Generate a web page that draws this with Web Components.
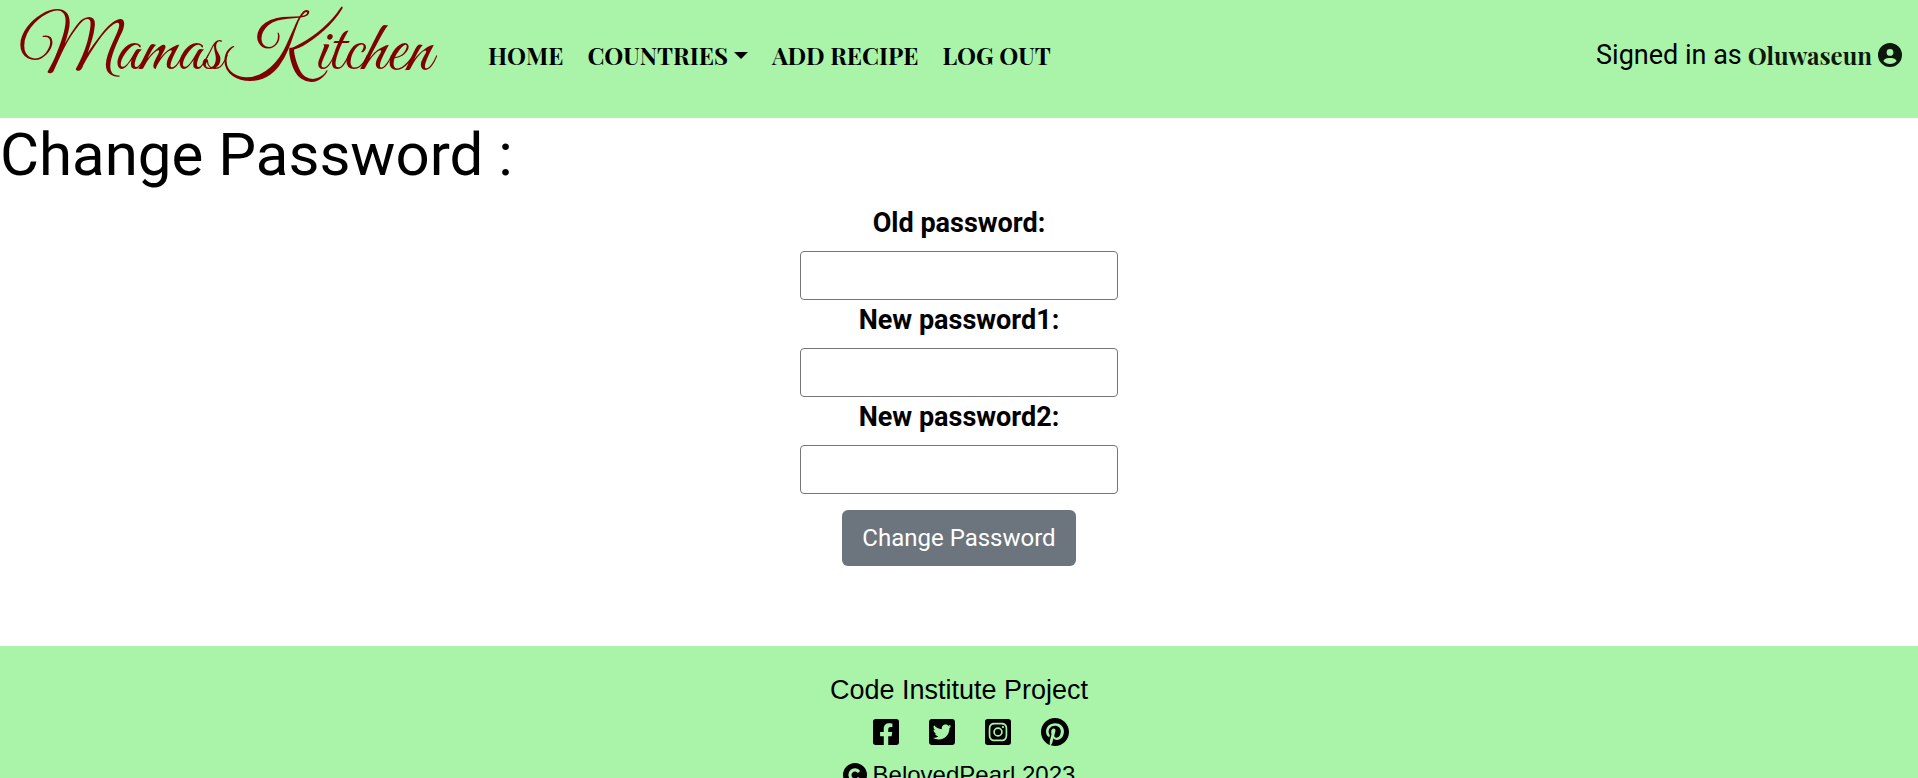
<!DOCTYPE html>
<html lang="en">
<head>
<meta charset="utf-8">
<meta name="viewport" content="width=device-width, initial-scale=1">
<title>Mamas Kitchen - Change Password</title>
<style>
  html { scrollbar-width: none; }
  body {
    margin: 0;
    background: #fff;
    color: #000;
    font-family: Roboto, "Liberation Sans", sans-serif;
    font-size: 27px;
    line-height: 40px;
    --brand-green: #aaf4aa;
    --display-font: "Playfair Display", "Liberation Serif", serif;
  }
</style>
</head>
<body>
<kitchen-page>
  <site-header slot="header" user="Oluwaseun"></site-header>
  <password-form></password-form>
  <site-footer slot="footer"></site-footer>
</kitchen-page>

<script>
const define = (name, html, setup) => {
  const template = document.createElement('template');
  template.innerHTML = html;
  customElements.define(name, class extends HTMLElement {
    constructor() {
      super();
      this.attachShadow({ mode: 'open' }).append(template.content.cloneNode(true));
    }
    connectedCallback() {
      if (setup) setup(this, this.shadowRoot);
    }
  });
};

const ICONS = {
  user: ['0 0 512 512', '<path d="M399 384.2C376.9 345.8 335.4 320 288 320H224c-47.4 0-88.9 25.8-111 64.2c35.2 39.2 86.2 63.8 143 63.8s107.8-24.7 143-63.8zM0 256a256 256 0 1 1 512 0A256 256 0 1 1 0 256zm256 16a72 72 0 1 0 0-144 72 72 0 1 0 0 144z"/>'],
  facebook: ['0 32 448 448', '<path d="M400 32H48A48 48 0 0 0 0 80v352a48 48 0 0 0 48 48h137.25V327.69h-63V256h63v-54.64c0-62.15 37-96.48 93.67-96.48 27.14 0 55.52 4.84 55.52 4.84v61h-31.27c-30.81 0-40.42 19.12-40.42 38.73V256h68.78l-11 71.69h-57.78V480H400a48 48 0 0 0 48-48V80a48 48 0 0 0-48-48z"/>'],
  twitter: ['0 32 448 448', '<path d="M400 32H48C21.5 32 0 53.5 0 80v352c0 26.5 21.5 48 48 48h352c26.5 0 48-21.5 48-48V80c0-26.5-21.5-48-48-48zm-48.9 158.8c.2 2.8.2 5.7.2 8.5 0 86.7-66 186.6-186.6 186.6-37.2 0-71.7-10.8-100.7-29.4 5.3.6 10.4.8 15.8.8 30.7 0 58.9-10.4 81.4-28-28.8-.6-53-19.5-61.3-45.5 10.1 1.5 19.2 1.5 29.6-1.2-30-6.1-52.5-32.5-52.5-64.4v-.8c8.7 4.9 18.9 7.9 29.6 8.3a65.447 65.447 0 0 1-29.2-54.6c0-12.2 3.2-23.4 8.9-33.1 32.3 39.8 80.8 65.8 135.2 68.6-9.3-44.5 24-80.6 64-80.6 18.9 0 35.9 7.9 47.9 20.7 14.8-2.8 29-8.3 41.6-15.8-4.9 15.2-15.2 28-28.8 36.1 13.2-1.4 26-5.1 37.8-10.2-8.9 13.1-20.1 24.7-32.9 34z"/>'],
  instagram: ['0 32 448 448', '<path d="M224,202.66A53.34,53.34,0,1,0,277.36,256,53.38,53.38,0,0,0,224,202.66Zm124.71-41a54,54,0,0,0-30.41-30.41c-21-8.29-71-6.43-94.3-6.43s-73.25-1.93-94.31,6.43a54,54,0,0,0-30.41,30.41c-8.28,21-6.43,71.05-6.43,94.33S91,329.26,99.32,350.33a54,54,0,0,0,30.41,30.41c21,8.29,71,6.43,94.31,6.43s73.24,1.93,94.3-6.43a54,54,0,0,0,30.41-30.41c8.35-21,6.43-71.05,6.43-94.33S357.1,182.74,348.75,161.67ZM224,338a82,82,0,1,1,82-82A81.9,81.9,0,0,1,224,338Zm85.38-148.3a19.14,19.14,0,1,1,19.13-19.14A19.1,19.1,0,0,1,309.42,189.74ZM400,32H48A48,48,0,0,0,0,80V432a48,48,0,0,0,48,48H400a48,48,0,0,0,48-48V80A48,48,0,0,0,400,32ZM382.88,322c-1.29,25.63-7.14,48.34-25.85,67s-41.4,24.63-67,25.85c-26.41,1.49-105.59,1.49-132,0-25.63-1.29-48.26-7.15-67-25.85s-24.63-41.42-25.85-67c-1.49-26.42-1.49-105.61,0-132,1.29-25.63,7.07-48.34,25.85-67s41.47-24.56,67-25.78c26.41-1.49,105.59-1.49,132,0,25.63,1.29,48.33,7.15,67,25.85s24.63,41.42,25.85,67.05C384.37,216.44,384.37,295.56,382.88,322Z"/>'],
  pinterest: ['0 8 496 496', '<path d="M496 256c0 137-111 248-248 248-25.6 0-50.2-3.9-73.4-11.1 10.1-16.5 25.2-43.5 30.8-65 3-11.6 15.4-59 15.4-59 8.1 15.4 31.7 28.5 56.8 28.5 74.8 0 128.7-68.8 128.7-154.3 0-81.9-66.9-143.2-152.9-143.2-107 0-163.9 71.8-163.9 150.1 0 36.4 19.4 81.7 50.3 96.1 4.7 2.2 7.2 1.2 8.3-3.3.8-3.4 5-20.3 6.9-28.1.6-2.5.3-4.7-1.7-7.1-10.1-12.5-18.3-35.3-18.3-56.6 0-54.7 41.4-107.6 112-107.6 60.9 0 103.6 41.5 103.6 100.9 0 67.1-33.9 113.6-78 113.6-24.3 0-42.6-20.1-36.7-44.8 7-29.5 20.5-61.3 20.5-82.6 0-19-10.2-34.9-31.4-34.9-24.9 0-44.9 25.7-44.9 60.2 0 22 7.4 36.8 7.4 36.8s-24.5 103.8-29 123.2c-5 21.4-3 51.6-.9 71.2C65.4 450.9 0 361.1 0 256 0 119 111 8 248 8s248 111 248 248z"/>'],
  copyright: ['0 0 24 24', '<path fill-rule="evenodd" d="M12 0a12 12 0 1 0 0 24 12 12 0 1 0 0-24zM17.4 15.6A6.6 6.6 0 1 1 17.2 7.9L14.8 9.9A3.5 3.5 0 1 0 14.9 13.9z"/>']
};

define('glyph-icon', `
  <style>
    :host { display: inline-flex; flex: none; width: 24px; height: 24px; }
    svg { width: 100%; height: 100%; fill: currentColor; }
  </style>
  <svg aria-hidden="true"></svg>`,
  (host, root) => {
    const [box, shape] = ICONS[host.getAttribute('name')];
    const svg = root.querySelector('svg');
    svg.setAttribute('viewBox', box);
    svg.innerHTML = shape;
  });

define('nav-item', `
  <style>
    :host { display: block; }
    a {
      display: flex; align-items: center; gap: 6px;
      color: #000; text-decoration: none; white-space: nowrap;
      font: bold 24px/40px var(--display-font);
    }
    .caret { display: none; border: 7px solid transparent; border-top-color: currentColor; border-bottom: 0; }
    :host([dropdown]) .caret { display: block; }
  </style>
  <a href="#"><slot></slot><span class="caret"></span></a>`);

define('site-header', `
  <style>
    :host { display: block; background: var(--brand-green); }
    header { display: flex; align-items: flex-start; padding: 0 16px 28px; }
    .brand {
      color: #800000; text-decoration: none; white-space: nowrap;
      font: 72px/74px "Great Vibes", "Liberation Serif", serif;
      padding: 16px 56px 0 3px;
    }
    nav { display: flex; gap: 24px; margin-top: 35px; }
    .user { display: flex; align-items: center; gap: 6px; margin: 35px 0 0 auto; white-space: nowrap; }
    .user a { display: flex; align-items: center; gap: 6px; color: #0b180b; text-decoration: none; }
    strong { font: bold 24px/40px var(--display-font); }
  </style>
  <header>
    <a class="brand" href="#">MamasKitchen</a>
    <nav aria-label="Main">
      <nav-item>HOME</nav-item>
      <nav-item dropdown>COUNTRIES</nav-item>
      <nav-item>ADD RECIPE</nav-item>
      <nav-item>LOG OUT</nav-item>
    </nav>
    <div class="user"><span>Signed in as</span><a href="#"><strong></strong><glyph-icon name="user"></glyph-icon></a></div>
  </header>`,
  (host, root) => { root.querySelector('strong').textContent = host.getAttribute('user'); });

define('password-field', `
  <style>
    :host { display: flex; flex-direction: column; align-items: center; }
    label { font-weight: bold; margin-bottom: 8px; }
    input {
      box-sizing: border-box; width: 318px; max-width: 100%; height: 49px;
      padding: 1px 4px; border: 1px solid #767676; border-radius: 4px;
      background: #fff; font: inherit;
    }
  </style>
  <label for="field"><slot></slot></label>
  <input id="field" type="password">`);

define('password-form', `
  <style>
    :host { display: block; }
    h1 { margin: 0 0 12px; font-size: 60px; line-height: 73px; font-weight: 400; }
    form { display: flex; flex-direction: column; align-items: center; }
    button {
      margin-top: 16px; padding: 8px 20px; border: 0; border-radius: 6px;
      background: #6c757d; color: #fff; font: 24px/40px Roboto, sans-serif;
    }
  </style>
  <h1>Change Password :</h1>
  <form>
    <password-field>Old password:</password-field>
    <password-field>New password1:</password-field>
    <password-field>New password2:</password-field>
    <button type="submit">Change Password</button>
  </form>`);

define('site-footer', `
  <style>
    :host { display: block; background: var(--brand-green); font-family: "Liberation Sans", sans-serif; }
    footer { display: flex; flex-direction: column; align-items: center; padding: 24px 16px; }
    p { margin: 0; }
    ul { display: flex; align-items: center; gap: 30px; margin: 0; padding: 8px 0 9px 24px; list-style: none; }
    li, li a { display: flex; color: #000; }
    li glyph-icon { width: 26px; height: 26px; }
    li glyph-icon[name="pinterest"] { width: 28px; height: 28px; }
    .copy { display: flex; align-items: center; gap: 6px; font-size: 24px; }
  </style>
  <footer>
    <p>Code Institute Project</p>
    <ul>
      <li><a href="#" aria-label="Facebook"><glyph-icon name="facebook"></glyph-icon></a></li>
      <li><a href="#" aria-label="Twitter"><glyph-icon name="twitter"></glyph-icon></a></li>
      <li><a href="#" aria-label="Instagram"><glyph-icon name="instagram"></glyph-icon></a></li>
      <li><a href="#" aria-label="Pinterest"><glyph-icon name="pinterest"></glyph-icon></a></li>
    </ul>
    <p class="copy"><glyph-icon name="copyright"></glyph-icon>BelovedPearl 2023</p>
  </footer>`);

define('kitchen-page', `
  <style>
    :host { display: block; }
    main { padding-bottom: 80px; }
  </style>
  <slot name="header"></slot>
  <main><slot></slot></main>
  <slot name="footer"></slot>`);
</script>
</body>
</html>
